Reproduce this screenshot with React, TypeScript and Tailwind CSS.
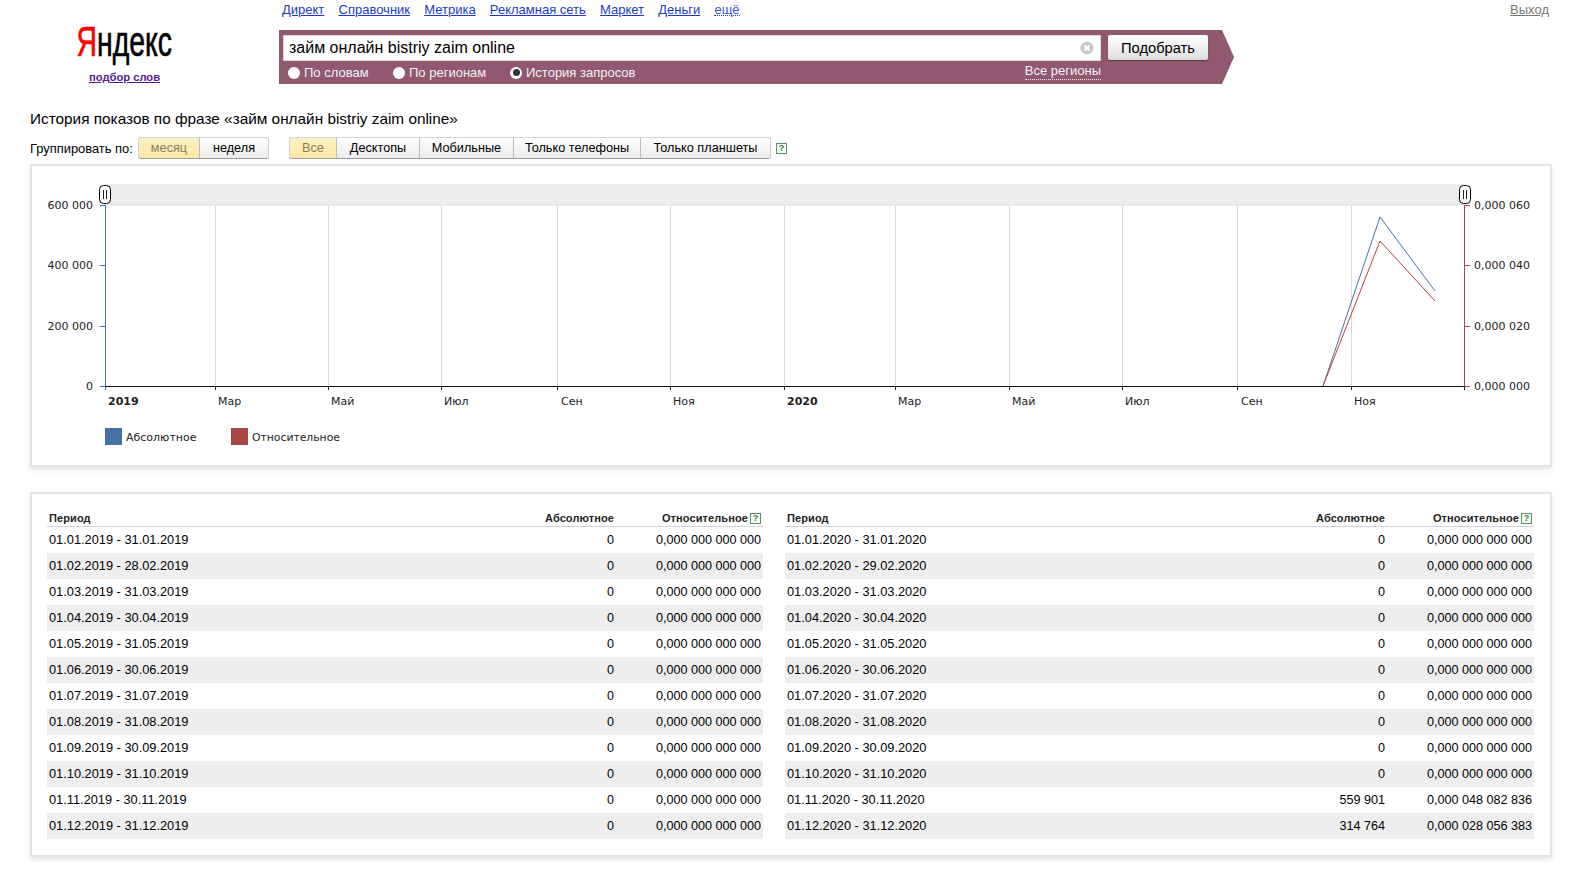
const navLinks = ['Директ', 'Справочник', 'Метрика', 'Рекламная сеть', 'Маркет', 'Деньги']

const ticksX = [215, 328, 441, 557, 670, 784, 895, 1009, 1122, 1237, 1351]

const xLabels = [
  { x: 108, t: '2019', bold: true },
  { x: 218, t: 'Мар' },
  { x: 331, t: 'Май' },
  { x: 444, t: 'Июл' },
  { x: 561, t: 'Сен' },
  { x: 673, t: 'Ноя' },
  { x: 787, t: '2020', bold: true },
  { x: 898, t: 'Мар' },
  { x: 1012, t: 'Май' },
  { x: 1125, t: 'Июл' },
  { x: 1241, t: 'Сен' },
  { x: 1354, t: 'Ноя' },
]

const yLabels = [
  { y: 205, l: '600 000', r: '0,000 060' },
  { y: 265, l: '400 000', r: '0,000 040' },
  { y: 326, l: '200 000', r: '0,000 020' },
  { y: 386, l: '0', r: '0,000 000' },
]

const ends = ['31', '28', '31', '30', '31', '30', '31', '31', '30', '31', '30', '31']
const months = ['01', '02', '03', '04', '05', '06', '07', '08', '09', '10', '11', '12']

type Row = { period: string; abs: string; rel: string }

const rows2019: Row[] = months.map((m, i) => ({
  period: `01.${m}.2019 - ${ends[i]}.${m}.2019`,
  abs: '0',
  rel: '0,000 000 000 000',
}))

const rows2020: Row[] = months.map((m, i) => ({
  period: `01.${m}.2020 - ${i === 1 ? '29' : ends[i]}.${m}.2020`,
  abs: i === 10 ? '559 901' : i === 11 ? '314 764' : '0',
  rel: i === 10 ? '0,000 048 082 836' : i === 11 ? '0,000 028 056 383' : '0,000 000 000 000',
}))

function Help() {
  return (
    <span className="inline-flex h-[11px] w-[11px] items-center justify-center border border-[#4f9460] bg-[#f4faf4] text-[9px] leading-none font-bold text-[#3f7d4c]">
      ?
    </span>
  )
}

function Radio({ label, checked }: { label: string; checked?: boolean }) {
  return (
    <div className="flex items-center gap-[4px]">
      <span className="flex h-[12px] w-[12px] items-center justify-center rounded-full bg-white">
        {checked && <span className="h-[7px] w-[7px] rounded-full bg-[#333]" />}
      </span>
      <span>{label}</span>
    </div>
  )
}

function Segments({ items }: { items: { t: string; w: string; on?: boolean }[] }) {
  return (
    <div className="flex h-[22px] rounded-[3px] border-b border-[#999] shadow-[0_0_0_1px_#ddd_inset]">
      {items.map((it, i) => (
        <div
          key={it.t}
          className={`flex items-center justify-center border-t border-[#d4d4d4] pt-[1px] ${it.w} ${i > 0 ? 'border-l border-l-[#bbb]' : 'border-l border-l-[#d4d4d4]'} ${i === 0 ? 'rounded-l-[3px]' : ''} ${i === items.length - 1 ? 'rounded-r-[3px] border-r border-r-[#ccc]' : ''} ${it.on ? 'bg-linear-to-b from-[#fdf2c6] to-[#fbe7a4] text-[#8a7e5c]' : 'bg-linear-to-b from-white to-[#ececec] text-black'}`}
        >
          {it.t}
        </div>
      ))}
    </div>
  )
}

function Handle({ x }: { x: number }) {
  return (
    <g>
      <rect x={x} y={185.5} width={11} height={18} rx={4} fill="#fff" stroke="#000" />
      <line x1={x + 4} y1={190} x2={x + 4} y2={199} stroke="#222" />
      <line x1={x + 7} y1={190} x2={x + 7} y2={199} stroke="#222" />
    </g>
  )
}

function Chart() {
  return (
    <svg width={1517} height={298} viewBox="32 166 1517 298" fontFamily="'DejaVu Sans', sans-serif" fontSize={11} fill="#222">
      <rect x={105} y={184} width={1360} height={21} fill="#ececec" />
      <line x1={105} y1={205} x2={1465} y2={205} stroke="#dcdcdc" />
      {ticksX.map((x) => (
        <g key={x}>
          <line x1={x + 0.5} y1={205} x2={x + 0.5} y2={386} stroke="#d8d8d8" />
          <line x1={x + 0.5} y1={386} x2={x + 0.5} y2={390} stroke="#222" />
        </g>
      ))}
      <line x1={105.5} y1={205} x2={105.5} y2={390} stroke="#4572a7" />
      <line x1={1464.5} y1={205} x2={1464.5} y2={390} stroke="#aa4643" />
      <line x1={105} y1={386.5} x2={1465} y2={386.5} stroke="#111" />
      <line x1={1464.5} y1={386} x2={1464.5} y2={390} stroke="#222" />
      {yLabels.map((r) => (
        <g key={r.y}>
          <line x1={100} y1={r.y + 0.5} x2={105} y2={r.y + 0.5} stroke="#4572a7" />
          <line x1={1465} y1={r.y + 0.5} x2={1470} y2={r.y + 0.5} stroke="#aa4643" />
          <text x={93} y={r.y + 4} textAnchor="end">{r.l}</text>
          <text x={1474} y={r.y + 4}>{r.r}</text>
        </g>
      ))}
      {xLabels.map((l) => (
        <text key={l.x} x={l.x} y={405} fontWeight={l.bold ? 700 : 400}>{l.t}</text>
      ))}
      <polyline points="1323,386 1380,217 1435,291" fill="none" stroke="#4572a7" />
      <polyline points="1323,386 1380,241 1435,301" fill="none" stroke="#aa4643" />
      <Handle x={99.5} />
      <Handle x={1459.5} />
      <rect x={105} y={428} width={17} height={17} fill="#4572a7" />
      <text x={126} y={441}>Абсолютное</text>
      <rect x={231} y={428} width={17} height={17} fill="#aa4643" />
      <text x={252} y={441} fontSize={10.8}>Относительное</text>
    </svg>
  )
}

function DataTable({ rows, className }: { rows: Row[]; className: string }) {
  return (
    <div className={className}>
      <div className="flex h-[19px] items-center border-b border-[#d2d2dc] px-[2px] pt-[3px] text-[11px] font-bold tracking-[0.1px] text-[#222]">
        <div className="flex-1">Период</div>
        <div className="w-[100px] text-right">Абсолютное</div>
        <div className="flex w-[147px] items-center justify-end gap-[2px]">
          Относительное <Help />
        </div>
      </div>
      {rows.map((r, i) => (
        <div key={r.period} className={`flex h-[26px] items-center px-[2px] ${i % 2 === 1 ? 'bg-[#eeeeee]' : ''}`}>
          <div className="flex-1 text-[12.8px]">{r.period}</div>
          <div className="w-[100px] text-right text-[12.6px]">{r.abs}</div>
          <div className="w-[147px] text-right text-[12.6px]">{r.rel}</div>
        </div>
      ))}
    </div>
  )
}

export default function App() {
  return (
    <div className="h-[872px] w-[1570px] overflow-hidden bg-white font-['Liberation_Sans',Arial,sans-serif] text-[13px] text-black">
      <div className="flex h-[84px]">
        <div className="flex w-[249px] shrink-0 flex-col items-center pt-[17px]">
          <div className="h-[48px] scale-x-[0.66] text-[43px] leading-[48px] whitespace-nowrap [-webkit-text-stroke:0.7px_currentColor]">
            <span className="text-[#f00]">Я</span>ндекс
          </div>
          <a className="mt-[5px] text-[11.2px] leading-[14px] font-bold text-[#551a8b] underline">подбор слов</a>
        </div>
        <div className="ml-[30px] flex-1">
          <div className="flex h-[30px] justify-between pr-[21px] pl-[3px] leading-[20px]">
            <div className="flex gap-[14.2px]">
              {navLinks.map((l) => (
                <a key={l} className="text-[#1a3dc1] underline">{l}</a>
              ))}
              <a className="h-[16px] border-b border-dotted border-[#1a3dc1] text-[#3a56c8]">ещё</a>
            </div>
            <a className="text-[#777] underline">Выход</a>
          </div>
          <div className="h-[54px] w-[955px] bg-[#91586f] pt-[5px] pl-[4px] [clip-path:polygon(0_0,943px_0,100%_50%,943px_100%,0_100%)]">
            <div className="flex items-start">
              <div className="flex h-[26px] w-[818px] items-center justify-between border border-[#d8d8d8] bg-white pr-[6px] pl-[5px] text-[16px]">
                <span>займ онлайн bistriy zaim online</span>
                <svg width="14" height="14" viewBox="0 0 14 14">
                  <circle cx="7" cy="7" r="6.5" fill="#c9c9c9" />
                  <path d="M4.5 4.5 9.5 9.5M9.5 4.5 4.5 9.5" stroke="#fff" strokeWidth="1.8" />
                </svg>
              </div>
              <button className="ml-[7px] h-[25px] w-[100px] rounded-[2px] bg-linear-to-b from-white to-[#dedede] pt-[1px] text-[14.7px] shadow-[0_1px_1px_rgba(0,0,0,0.4)]">
                Подобрать
              </button>
            </div>
            <div className="mt-[2px] flex w-[818px] items-center justify-between pl-[5px] text-[#f2f2f2]">
              <div className="flex">
                <div className="w-[105px]"><Radio label="По словам" /></div>
                <div className="w-[117px]"><Radio label="По регионам" /></div>
                <Radio label="История запросов" checked />
              </div>
              <span className="-mt-[3px] border-b border-dotted border-[#e8e8e8] leading-[16px]">Все регионы</span>
            </div>
          </div>
        </div>
      </div>

      <h1 className="mt-[26px] ml-[30px] text-[15.35px] leading-[17px] font-normal">
        История показов по фразе «займ онлайн bistriy zaim online»
      </h1>

      <div className="mt-[10px] ml-[30px] flex h-[22px] items-center text-[12.7px]">
        <span className="w-[108px] pt-[1px] text-[12.9px]">Группировать по:</span>
        <Segments items={[{ t: 'месяц', w: 'w-[61px]', on: true }, { t: 'неделя', w: 'w-[70px]' }]} />
        <div className="ml-[20px]">
          <Segments
            items={[
              { t: 'Все', w: 'w-[47px]', on: true },
              { t: 'Десктопы', w: 'w-[83px]' },
              { t: 'Мобильные', w: 'w-[94px]' },
              { t: 'Только телефоны', w: 'w-[127px]' },
              { t: 'Только планшеты', w: 'w-[131px]' },
            ]}
          />
        </div>
        <span className="ml-[5px] flex"><Help /></span>
      </div>

      <div className="mt-[5px] ml-[30px] h-[303px] w-[1522px] border-2 border-[#e3e3e3] bg-white shadow-[0_3px_5px_rgba(0,0,0,0.1)]">
        <Chart />
      </div>

      <div className="mt-[25px] ml-[30px] flex h-[365px] w-[1522px] gap-[22px] border-2 border-[#e3e3e3] bg-white pt-[14px] pl-[15px] shadow-[0_3px_5px_rgba(0,0,0,0.1)]">
        <DataTable rows={rows2019} className="w-[716px]" />
        <DataTable rows={rows2020} className="w-[749px]" />
      </div>
    </div>
  )
}
